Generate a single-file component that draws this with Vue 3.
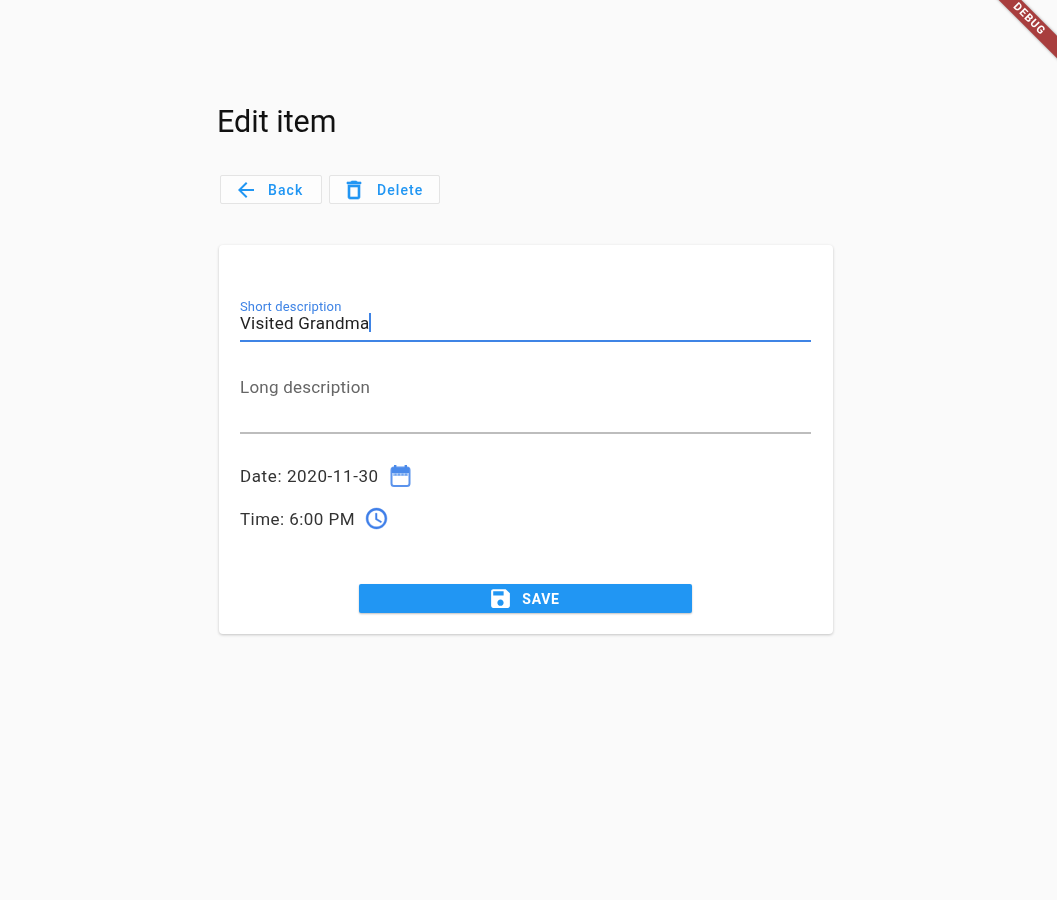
<template>
  <div class="page">
    <div class="ribbon"><span>DEBUG</span></div>
    <main class="content">
      <h1 class="title">Edit item</h1>
      <div class="actions">
        <button class="outline back">
          <svg class="i24" viewBox="0 0 24 24"><path d="M20 11H7.83l5.59-5.59L12 4l-8 8 8 8 1.41-1.41L7.83 13H20v-2z"/></svg>
          <span>Back</span>
        </button>
        <button class="outline del">
          <svg class="i24 trash" viewBox="0 0 24 24"><path d="M6 19c0 1.1.9 2 2 2h8c1.1 0 2-.9 2-2V7H6v12zM8 9h8v10H8V9zm7.5-5l-1-1h-5l-1 1H5v2h14V4h-3.5z"/></svg>
          <span>Delete</span>
        </button>
      </div>
      <section class="card">
        <div class="field focused">
          <label>Short description</label>
          <div class="value">Visited Grandma<i class="caret"></i></div>
        </div>
        <div class="field long">
          <label>Long description</label>
        </div>
        <div class="line date">
          <span>Date: 2020-11-30</span>
          <svg class="i24" viewBox="0 0 24 24">
            <rect class="cal-frame" x="3.5" y="3.5" width="18" height="18.5" rx="2.5"/>
            <path class="cal-fill" d="M6 1h2.400v4H6zM16.600 1H19v4h-2.400zM4 4h17v5H4z"/>
            <path class="cal-dots" d="M5 9h15v3H5z"/>
            <path class="cal-marks" d="M6.500 9.500h2v2h-2zM10 9.500h2v2h-2zM13.500 9.500h2v2h-2zM17 9.500h2v2h-2z"/>
          </svg>
        </div>
        <div class="line time">
          <span>Time: 6:00 PM</span>
          <svg class="i25 blue" viewBox="0 0 24 24"><path d="M11.990 2C6.470 2 2 6.480 2 12s4.470 10 9.990 10C17.520 22 22 17.520 22 12S17.520 2 11.990 2zM12 20c-4.420 0-8-3.580-8-8s3.580-8 8-8 8 3.580 8 8-3.580 8-8 8zm.5-13H11v6l5.250 3.150.75-1.230-4.500-2.670V7z"/></svg>
        </div>
        <div class="save-row">
          <button class="save">
            <svg class="i25 white" viewBox="0 0 24 24"><path d="M17 3H5c-1.110 0-2 .9-2 2v14c0 1.100.89 2 2 2h14c1.100 0 2-.9 2-2V7l-4-4zm-5 16c-1.660 0-3-1.340-3-3s1.340-3 3-3 3 1.340 3 3-1.340 3-3 3zm3-10H5V5h10v4z"/></svg>
            <span>SAVE</span>
          </button>
        </div>
      </section>
    </main>
  </div>
</template>

<script setup>
</script>

<style>
html, body { margin: 0; background: #fafafa; }
</style>

<style scoped>
.page {
  position: relative;
  width: 1057px;
  height: 900px;
  overflow: hidden;
  background: #fafafa;
  font-family: Roboto, "Liberation Sans", sans-serif;
  color: #222;
  filter: blur(0.6px);
}
.content {
  width: 614px;
  padding: 103px 0 0 219px;
  box-sizing: content-box;
}
.title {
  margin: 0 0 0 -2px;
  font-size: 30.5px;
  font-weight: 400;
  line-height: 37px;
  color: #111;
}
.actions {
  display: flex;
  gap: 8px;
  margin: 35px 0 41px 1px;
}
button {
  font-family: inherit;
  cursor: pointer;
}
.outline {
  display: flex;
  align-items: center;
  height: 29px;
  padding: 0;
  background: #fdfdfd;
  border: 1px solid #e4e4e4;
  border-radius: 2px;
  color: #2196f3;
  font-size: 14px;
  font-weight: 500;
  letter-spacing: 1.1px;
}
.outline .i24 { fill: #2196f3; }
.trash { stroke: #2196f3; stroke-width: 0.6; }
.back { width: 102px; padding-left: 13px; gap: 10px; }
.del { width: 111px; padding-left: 12px; gap: 11px; margin-left: -1px; }
.i24 { width: 24px; height: 24px; flex: none; }
.i25 { width: 25px; height: 25px; flex: none; }
.blue { fill: #3f7fe8; stroke: #3f7fe8; stroke-width: 0.4; }
.white { fill: #fff; }
.cal-frame { fill: #fff; stroke: #5b93ec; stroke-width: 2; }
.cal-fill { fill: #4a8aea; }
.cal-dots { fill: #a9c9f6; }
.cal-marks { fill: #6ea2ef; }
.card {
  height: 389px;
  padding: 0 22px 0 21px;
  box-sizing: border-box;
  background: #fff;
  border-radius: 4px;
  box-shadow: 0 1px 3px rgba(0, 0, 0, 0.22);
  display: flex;
  flex-direction: column;
}
.field { position: relative; border-bottom: 2px solid #bdbdbd; }
.focused {
  margin-top: 55px;
  height: 42px;
  border-bottom-color: #3f84e5;
  box-sizing: border-box;
}
.focused label {
  display: block;
  font-size: 13px;
  letter-spacing: 0.14px;
  line-height: 13px;
  color: #3f84e5;
}
.value {
  display: flex;
  align-items: center;
  font-size: 17px;
  letter-spacing: 0.25px;
  line-height: 16px;
  color: #222;
}
.caret {
  display: block;
  width: 1.5px;
  height: 19px;
  background: #3f84e5;
}
.long {
  margin-top: 36px;
  height: 56px;
  box-sizing: border-box;
}
.long label {
  display: block;
  font-size: 17px;
  letter-spacing: 0.23px;
  line-height: 19px;
  color: #666;
}
.line {
  display: flex;
  align-items: center;
  gap: 9px;
  font-size: 17px;
  line-height: 24px;
  color: #333;
}
.date { margin-top: 30px; letter-spacing: 0.6px; }
.time { margin-top: 18px; letter-spacing: 0.45px; }
.save-row {
  display: flex;
  justify-content: center;
  margin-top: 53px;
}
.save {
  display: flex;
  align-items: center;
  justify-content: center;
  gap: 9px;
  width: 333px;
  height: 29px;
  padding: 0 3px 0 0;
  border: 0;
  border-radius: 2px;
  background: #2196f3;
  color: #fff;
  font-size: 14px;
  font-weight: 700;
  letter-spacing: 0.7px;
  box-shadow: 0 1px 2px rgba(0, 0, 0, 0.25);
}
.ribbon {
  position: absolute;
  top: 0;
  right: 0;
  width: 80px;
  height: 80px;
  overflow: hidden;
}
.ribbon span {
  position: absolute;
  top: 14px;
  right: -35px;
  width: 120px;
  height: 16px;
  padding-right: 8px;
  box-sizing: border-box;
  line-height: 16px;
  text-align: center;
  background: #a83e3e;
  color: #fff;
  font-size: 11px;
  font-weight: 700;
  letter-spacing: 1px;
  transform: rotate(45deg);
  box-shadow: 0 0 3px rgba(0, 0, 0, 0.4);
}
</style>
